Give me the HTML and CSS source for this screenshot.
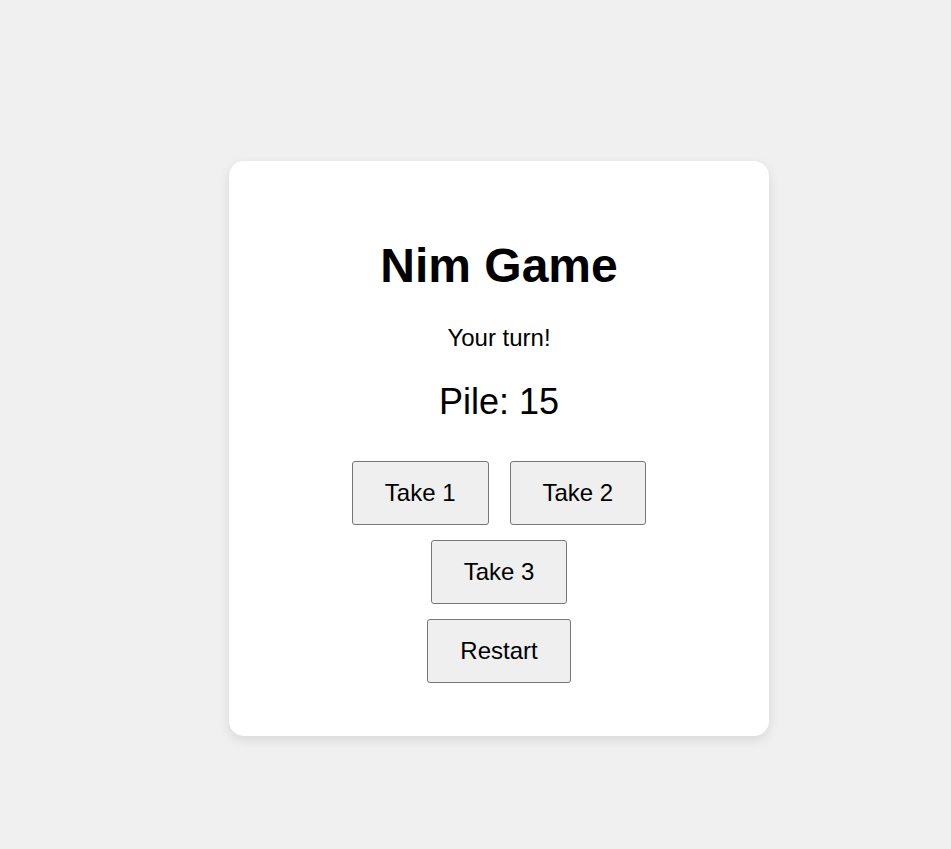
FILE: index.html
```html
<!DOCTYPE html>
<html lang="en">
<head>
<meta charset="utf-8">
<title>Nim Game</title>
<link rel="stylesheet" href="styles.css">
</head>
<body>
  <main class="card">
    <h1 class="title">Nim Game</h1>
    <p class="status">Your turn!</p>
    <div class="pile">Pile: 15</div>
    <div class="controls">
      <div class="row">
        <button class="btn" type="button">Take 1</button>
        <button class="btn" type="button">Take 2</button>
      </div>
      <div class="row">
        <button class="btn" type="button">Take 3</button>
      </div>
      <div class="row">
        <button class="btn" type="button">Restart</button>
      </div>
    </div>
  </main>
</body>
</html>
```

FILE: styles.css
```css
html, body {
  margin: 0;
}

body {
  box-sizing: border-box;
  min-height: 100vh;
  padding: 48px 0 0 47px;
  background: #f0f0f0;
  font-family: "Liberation Sans", Arial, sans-serif;
  color: #000;
  display: flex;
  justify-content: center;
  align-items: center;
}

.card {
  box-sizing: border-box;
  width: 540px;
  padding: 77px 40px 53px;
  background: #fff;
  border-radius: 15px;
  box-shadow: 0 4px 12px rgba(0, 0, 0, 0.1);
  text-align: center;
  display: flex;
  flex-direction: column;
  align-items: center;
}

.title {
  margin: 0;
  font-size: 48px;
  font-weight: bold;
  line-height: normal;
}

.status {
  margin: 31px 0 0;
  font-size: 24px;
  line-height: normal;
}

.pile {
  margin-top: 29px;
  font-size: 36px;
  line-height: normal;
}

.controls {
  margin-top: 38px;
  display: flex;
  flex-direction: column;
  align-items: center;
  gap: 15px;
}

.row {
  display: flex;
  justify-content: center;
  gap: 21px;
}

.btn {
  font-family: "Liberation Sans", Arial, sans-serif;
  font-size: 24px;
  line-height: 28px;
  padding: 17px 32px;
  color: #000;
  background: #efefef;
  border: 1px solid #767676;
  border-radius: 3px;
  cursor: pointer;
}
```
